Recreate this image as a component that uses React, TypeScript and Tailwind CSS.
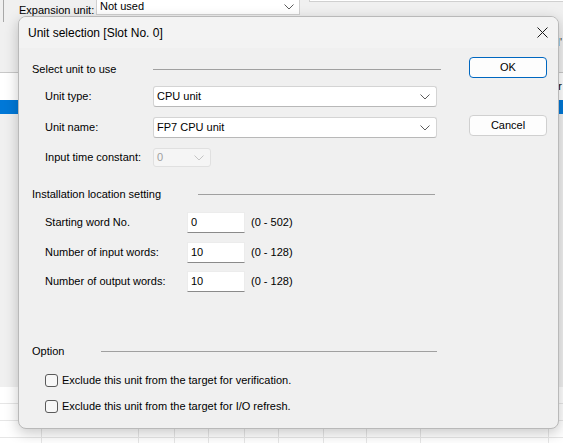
import React from 'react';

const Chevron: React.FC<{ muted?: boolean }> = ({ muted }) => (
  <svg width="10" height="6" viewBox="0 0 10 6" className="shrink-0">
    <path d="M0.5 0.5 L5 5 L9.5 0.5" fill="none" stroke={muted ? '#c4c4c4' : '#5c5c5c'} strokeWidth="1" />
  </svg>
);

const CloseIcon = () => (
  <svg width="11" height="11" viewBox="0 0 11 11">
    <path d="M0.5 0.5 L10.5 10.5 M10.5 0.5 L0.5 10.5" stroke="#1b1b1b" strokeWidth="1" fill="none" />
  </svg>
);

const GroupHeader: React.FC<{ title: string; labelW: string; lineW: string; className?: string }> = ({
  title,
  labelW,
  lineW,
  className,
}) => (
  <div className={`flex h-[16px] items-center ${className ?? ''}`}>
    <span className={`${labelW} shrink-0`}>{title}</span>
    <div className={`${lineW} h-px bg-[#a0a0a0]`} />
  </div>
);

const ComboRow: React.FC<{ label: string; value: string; className?: string }> = ({ label, value, className }) => (
  <div className={`flex items-center pl-[13px] ${className ?? ''}`}>
    <span className="w-[108px] shrink-0">{label}</span>
    <div className="flex h-[21px] w-[284px] items-center justify-between rounded-[3px] border border-[#d4d4d4] border-b-[#b8b8b8] bg-white pl-[3px] pr-[6px]">
      <span>{value}</span>
      <Chevron />
    </div>
  </div>
);

const NumberRow: React.FC<{ label: string; value: string; range: string; className?: string }> = ({
  label,
  value,
  range,
  className,
}) => (
  <div className={`flex items-center pl-[13px] ${className ?? ''}`}>
    <span className="w-[142px] shrink-0">{label}</span>
    <div className="flex h-[21px] w-[58px] items-start border border-[#ececec] border-b-[#8a8a8a] bg-white pl-[3px] pt-[1px]">
      {value}
    </div>
    <span className="ml-[6px]">{range}</span>
  </div>
);

const CheckRow: React.FC<{ label: string; className?: string }> = ({ label, className }) => (
  <div className={`flex h-[16px] items-center pl-[13px] ${className ?? ''}`}>
    <div className="h-[13px] w-[13px] shrink-0 rounded-[3px] border border-[#5a5a5a] bg-[#f7f7f7]" />
    <span className="ml-[4px]">{label}</span>
  </div>
);

const gridCols = [41, 138, 174, 208, 244, 278, 323, 366, 420, 548];

export default function App() {
  return (
    <div className="relative flex h-[443px] w-[563px] flex-col overflow-hidden bg-[#f0f0f0] font-['Segoe_UI','Liberation_Sans',Arial,sans-serif] text-[11px] text-black">
      {/* background window */}
      <div className="flex h-[22px] shrink-0 items-start">
        <div className="h-[22px] w-[4px] border-r border-[#a8a8a8]" />
        <span className="ml-[15px] mt-[2px] w-[77px] shrink-0">Expansion unit:</span>
        <div className="-mt-[6px] flex h-[21px] w-[204px] items-center justify-between border border-[#d0d0d0] bg-white pl-[3px] pr-[5px] pt-[4px]">
          <span>Not used</span>
          <Chevron />
        </div>
        <div className="ml-[9px] h-[2px] flex-1 border-b border-l border-[#d0d0d0] bg-white" />
      </div>
      <div className="mt-[12px] flex h-[14px] shrink-0 justify-end pr-[1px]">
        <span className="text-[#444]">d'</span>
      </div>
      <div className="mt-[24px] shrink-0 border-t border-[#c8c8c8]">
        <div className="flex h-[27px] items-center justify-end bg-white pr-[1px]">
          <span>'r</span>
        </div>
        <div className="h-[14px] bg-[#0078d7]" />
      </div>
      <div className="h-[273px] shrink-0" />
      <div className="relative flex-1 bg-white">
        <div className="flex h-full flex-col">
          {[0, 1, 2, 3].map(i => (
            <div key={i} className="h-[17px] shrink-0 border-b border-[#e6e6e6]" />
          ))}
        </div>
        {gridCols.map(x => (
          <div key={x} className="absolute top-0 h-full w-px bg-[#e6e6e6]" style={{ left: x }} />
        ))}
      </div>

      {/* dialog */}
      <div className="absolute left-[18px] top-[16px] flex h-[413px] w-[541px] flex-col overflow-hidden rounded-[8px] border border-[#b9b9b9] bg-[#f0f0f0] shadow-[0_4px_14px_rgba(0,0,0,0.22)]">
        <div className="flex h-[31px] shrink-0 items-center justify-between bg-[#f3f3f3] pl-[9px] pr-[10px] text-[12px]">
          <span>Unit selection [Slot No. 0]</span>
          <CloseIcon />
        </div>
        <div className="flex flex-1">
          <div className="ml-[13px] flex w-[409px] flex-col">
            <GroupHeader title="Select unit to use" labelW="w-[121px]" lineW="w-[288px]" className="mt-[13px]" />
            <ComboRow label="Unit type:" value="CPU unit" className="mt-[9px]" />
            <ComboRow label="Unit name:" value="FP7 CPU unit" className="mt-[10px]" />
            <div className="mt-[10px] flex items-center pl-[13px]">
              <span className="w-[108px] shrink-0">Input time constant:</span>
              <div className="flex h-[19px] w-[58px] items-center justify-between rounded-[3px] border border-[#e0e0e0] bg-[#f5f5f5] pl-[3px] pr-[6px] text-[#a0a0a0]">
                <span>0</span>
                <Chevron muted />
              </div>
            </div>
            <GroupHeader title="Installation location setting" labelW="w-[166px]" lineW="w-[237px]" className="mt-[19px]" />
            <NumberRow label="Starting word No." value="0" range="(0 - 502)" className="mt-[10px]" />
            <NumberRow label="Number of input words:" value="10" range="(0 - 128)" className="mt-[9px]" />
            <NumberRow label="Number of output words:" value="10" range="(0 - 128)" className="mt-[8px]" />
            <GroupHeader title="Option" labelW="w-[69px]" lineW="w-[336px]" className="mt-[51px]" />
            <CheckRow label="Exclude this unit from the target for verification." className="mt-[13px]" />
            <CheckRow label="Exclude this unit from the target for I/O refresh." className="mt-[10px]" />
          </div>
          <div className="ml-[28px] flex flex-col">
            <button className="mt-[9px] h-[21px] w-[78px] rounded-[4px] border border-[#0067c0] bg-[#fdfdfd] text-[11px]">
              OK
            </button>
            <button className="mt-[37px] h-[21px] w-[78px] rounded-[4px] border border-[#d0d0d0] bg-[#fdfdfd] text-[11px]">
              Cancel
            </button>
          </div>
        </div>
      </div>
    </div>
  );
}
